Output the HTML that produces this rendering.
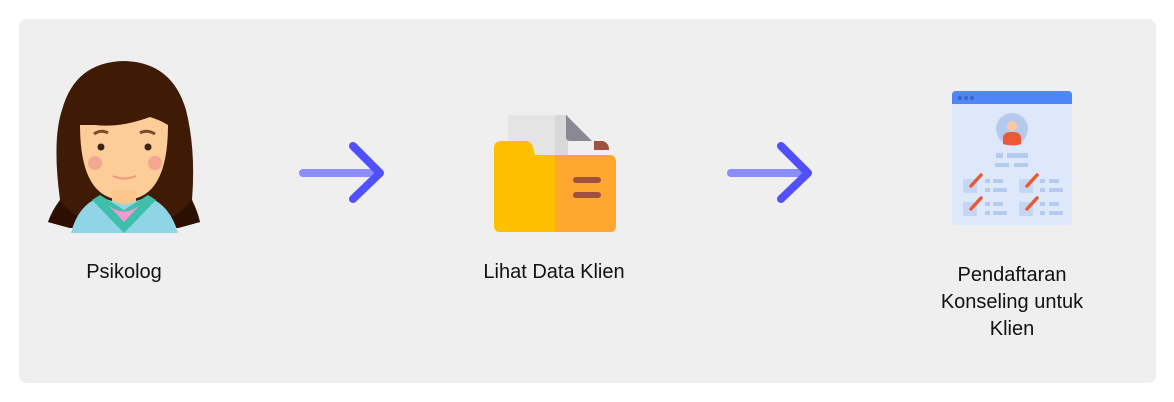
<!DOCTYPE html>
<html><head><style>
body{margin:0;width:1174px;height:402px;background:#fff;font-family:"Liberation Sans",Roboto,sans-serif;position:relative;overflow:hidden}
.card{position:absolute;left:19px;top:19px;width:1137px;height:364px;background:#efefef;border-radius:8px}
.t{position:absolute;font-size:20px;color:#111;text-align:center;line-height:27px}
svg{position:absolute;left:0;top:0}
</style></head><body>
<div class="card"></div>
<svg width="1174" height="402" viewBox="0 0 1174 402">
<!-- girl -->
<path d="M60 200 Q52 140 62 110 Q75 62 124 61 Q172 62 186 110 Q196 150 192 200 Q198 212 200 222 L178 228 L70 228 L48 222 Q52 210 60 200Z" fill="#3f1a05"/>
<path d="M60 200 Q70 215 90 222 L70 228 L48 222Z" fill="#2d0f02"/>
<path d="M192 200 Q180 215 160 222 L178 228 L200 222Z" fill="#2d0f02"/>
<path d="M80 125 Q80 200 124 200 Q168 200 168 125 Q160 120 150 117 Q120 128 95 125Z" fill="#fccd98"/>
<rect x="112" y="190" width="24" height="22" fill="#fbc58c"/>
<path d="M71 233 Q78 205 100 197 L124 205 L148 197 Q170 205 178 233Z" fill="#8fd5e6"/>
<path d="M92 200 L124 233 L156 200 L148 195 L124 210 L100 195Z" fill="#3dbfab"/>
<path d="M108 205 Q124 218 140 205 L124 222Z" fill="#f09ad1"/>
<circle cx="101" cy="147" r="3.5" fill="#3a241a"/><circle cx="148" cy="147" r="3.5" fill="#3a241a"/>
<path d="M94 134 Q101 129 108 133" stroke="#7a4a2a" stroke-width="3" fill="none"/>
<path d="M140 133 Q147 129 155 134" stroke="#7a4a2a" stroke-width="3" fill="none"/>
<circle cx="95" cy="163" r="7" fill="#f6a791"/><circle cx="155" cy="163" r="7" fill="#f6a791"/>
<path d="M113 176 Q124 181 136 176" stroke="#f0987a" stroke-width="2" fill="none"/>
<!-- arrows -->
<g stroke-linecap="round" fill="none" stroke-width="8">
<line x1="303" y1="173" x2="374" y2="173" stroke="#8a8cff"/>
<polyline points="353,146 380,173 353,199" stroke="#5050ff" stroke-linejoin="round"/>
<line x1="731" y1="173" x2="802" y2="173" stroke="#8a8cff"/>
<polyline points="781,146 808,173 781,199" stroke="#5050ff" stroke-linejoin="round"/>
</g>
<!-- folder -->
<rect x="508" y="115" width="60" height="45" fill="#e4e4e4"/>
<rect x="555" y="115" width="13" height="45" fill="#d9d9d9"/>
<path d="M566 115 L592 141 L570 141 Q566 141 566 137Z" fill="#8a8892"/>
<path d="M594 141 L603 141 Q609 143 609 150 L594 150Z" fill="#a0503e"/>
<path d="M494 148 Q494 141 502 141 L525 141 Q531 141 533 147 L535 155 L555 155 L555 232 L500 232 Q494 232 494 226Z" fill="#fdbf00"/>
<path d="M555 155 L610 155 Q616 155 616 162 L616 226 Q616 232 610 232 L555 232Z" fill="#ffa730"/>
<line x1="576" y1="180" x2="598" y2="180" stroke="#a0503e" stroke-width="6" stroke-linecap="round"/>
<line x1="576" y1="195" x2="598" y2="195" stroke="#a0503e" stroke-width="6" stroke-linecap="round"/>
<!-- form -->
<rect x="952" y="91" width="120" height="134" rx="4" fill="#dde9fb"/>
<path d="M952 104 L952 95 Q952 91 956 91 L1068 91 Q1072 91 1072 95 L1072 104Z" fill="#4f86f7"/>
<circle cx="960" cy="98" r="2" fill="#3a62c8"/><circle cx="966" cy="98" r="2" fill="#3a62c8"/><circle cx="972" cy="98" r="2" fill="#3a62c8"/>
<circle cx="1012" cy="129" r="16" fill="#b6c9ee"/>
<circle cx="1012" cy="126" r="5" fill="#fcc9a4"/>
<path d="M1003 144 L1003 138 Q1003 132 1012 132 Q1021 132 1021 138 L1021 144 Q1012 147 1003 144Z" fill="#ec5a35"/>
<g fill="#b6c9ee">
<rect x="996" y="153" width="7" height="5"/><rect x="1007" y="153" width="21" height="5"/>
<rect x="995" y="163" width="14" height="4"/><rect x="1014" y="163" width="14" height="4"/>
<rect x="963" y="179" width="14" height="14" fill="#c6d7f5"/><rect x="985" y="179" width="5" height="4"/><rect x="993" y="179" width="10" height="4"/><rect x="985" y="188" width="5" height="4"/><rect x="993" y="188" width="14" height="4"/>
<rect x="1019" y="179" width="14" height="14" fill="#c6d7f5"/><rect x="1040" y="179" width="5" height="4"/><rect x="1049" y="179" width="10" height="4"/><rect x="1040" y="188" width="5" height="4"/><rect x="1049" y="188" width="14" height="4"/>
<rect x="963" y="202" width="14" height="14" fill="#c6d7f5"/><rect x="985" y="202" width="5" height="4"/><rect x="993" y="202" width="10" height="4"/><rect x="985" y="211" width="5" height="4"/><rect x="993" y="211" width="14" height="4"/>
<rect x="1019" y="202" width="14" height="14" fill="#c6d7f5"/><rect x="1040" y="202" width="5" height="4"/><rect x="1049" y="202" width="10" height="4"/><rect x="1040" y="211" width="5" height="4"/><rect x="1049" y="211" width="14" height="4"/>
</g>
<g stroke="#ec5a35" stroke-width="3.5" stroke-linecap="round">
<line x1="971" y1="186" x2="981" y2="175"/><line x1="1027" y1="186" x2="1037" y2="175"/>
<line x1="971" y1="209" x2="981" y2="198"/><line x1="1027" y1="209" x2="1037" y2="198"/>
</g>
</svg>
<div class="t" style="left:44px;top:259px;width:160px">Psikolog</div>
<div class="t" style="left:454px;top:259px;width:200px">Lihat Data Klien</div>
<div class="t" style="left:912px;top:262px;width:200px">Pendaftaran<br>Konseling untuk<br>Klien</div>
</body></html>
